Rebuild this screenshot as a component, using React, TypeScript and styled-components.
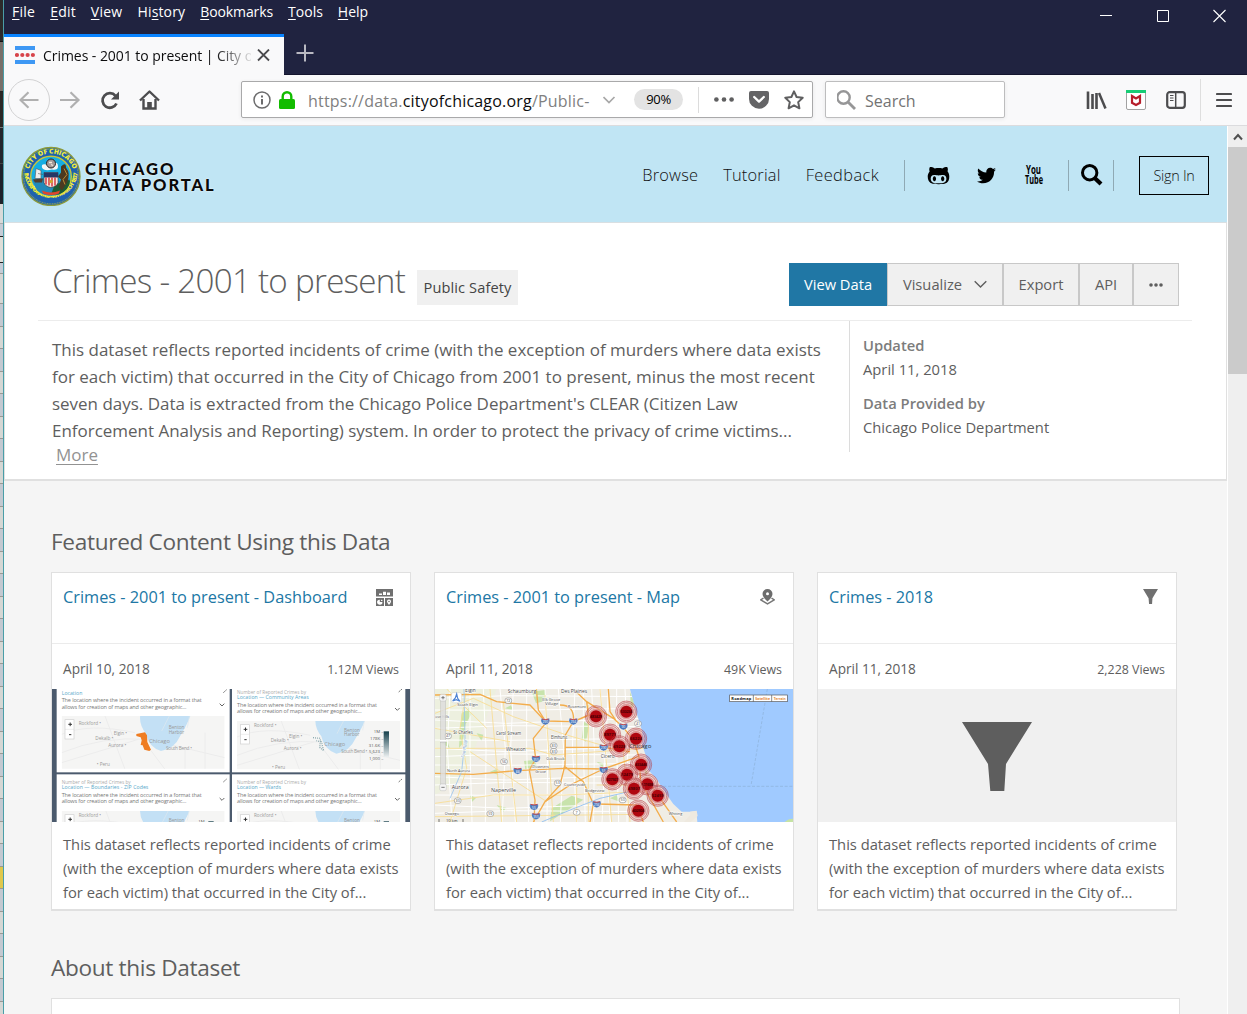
import React from "react";
import styled, { createGlobalStyle } from "styled-components";
import { FaGithubAlt, FaTwitter } from "react-icons/fa";

const ui = `"Open Sans", "Noto Sans", sans-serif`;

const Global = createGlobalStyle`
  * { box-sizing: border-box; }
  body { margin: 0; font-family: ${ui}; overflow: hidden; }
  h1, h2, h3, p { margin: 0; font-weight: 400; }
  svg { display: block; flex: none; }
`;

const Desktop = styled.div`
  display: flex;
  width: 1247px;
  height: 1014px;
  overflow: hidden;
`;
const Behind = styled.div`
  width: 4px;
  flex: none;
  border-right: 1px solid #4a9ea8;
  display: flex;
  flex-direction: column;
`;
const BehindBlock = styled.div<{ $h: number; $c: string; $line?: string }>`
  height: ${(p) => p.$h}px;
  flex: none;
  background: ${(p) => p.$c};
  border-bottom: 1px solid ${(p) => p.$line || "#9a9994"};
`;
const Window = styled.div`
  flex: 1;
  min-width: 0;
  display: flex;
  flex-direction: column;
`;

const TitleBar = styled.div`
  height: 34px;
  flex: none;
  background: #202340;
  display: flex;
  justify-content: space-between;
  padding-left: 8px;
`;
const Menu = styled.div`
  display: flex;
  height: 24px;
  gap: 15px;
  color: #fff;
  font-size: 14px;
  line-height: 24px;
`;
const MenuItem = styled.span<{ $ls: number }>`
  letter-spacing: ${(p) => p.$ls}px;
  u { text-underline-offset: 2px; text-decoration-thickness: 1px; }
`;
const Controls = styled.div`
  display: flex;
  gap: 43px;
  padding: 9px 20px 0 0;
`;
const TabStrip = styled.div`
  height: 41px;
  flex: none;
  background: #202340;
  display: flex;
  box-shadow: inset 0 -1px #14152e;
`;
const Tab = styled.div`
  width: 280px;
  border-top: 3px solid #0a84ff;
  background: #f9f9fa;
  display: flex;
  align-items: center;
  padding: 0 13px 2px 11px;
`;
const TabTitle = styled.div`
  width: 208px;
  margin: 2px 6px 0 8px;
  font-size: 14px;
  letter-spacing: -0.05px;
  white-space: nowrap;
  overflow: hidden;
  color: #0c0c0d;
  line-height: 24px;
  mask-image: linear-gradient(to right, #000 172px, transparent 212px);
`;
const NewTab = styled.div`
  padding: 10px 0 0 12px;
`;
const Toolbar = styled.div`
  height: 51px;
  flex: none;
  background: #f9f9fa;
  border-bottom: 1px solid #dcdcde;
  display: flex;
  align-items: center;
`;
const NavButtons = styled.div`
  display: flex;
  align-items: center;
  width: 237px;
  padding-left: 4px;
`;
const BackButton = styled.div`
  width: 42px;
  height: 42px;
  border: 1px solid #d2d2d3;
  border-radius: 50%;
  display: flex;
  align-items: center;
  justify-content: center;
  margin-right: 10px;
`;
const Gap = styled.span<{ $w: number }>`
  width: ${(p) => p.$w}px;
  flex: none;
`;
const Field = styled.div<{ $w: number; $border: string }>`
  width: ${(p) => p.$w}px;
  height: 37px;
  margin-bottom: 1px;
  background: #fff;
  border: 1px solid ${(p) => p.$border};
  border-radius: 2px;
  box-shadow: 0 1px 4px rgba(0, 0, 0, 0.07);
  display: flex;
  align-items: center;
  padding-left: 11px;
`;
const Url = styled.div`
  width: 283px;
  margin: 2px 12px 0 13px;
  font-size: 16px;
  letter-spacing: 0.2px;
  white-space: nowrap;
  color: #808080;
  b { font-weight: 400; color: #0c0c0d; }
`;
const Zoom = styled.div`
  width: 49px;
  height: 21px;
  border-radius: 11px;
  background: #e3e3e3;
  font-size: 13px;
  letter-spacing: -0.3px;
  line-height: 21px;
  text-align: center;
  margin-left: 18px;
`;
const Rule = styled.span<{ $h: number; $c: string }>`
  width: 1px;
  flex: none;
  height: ${(p) => p.$h}px;
  background: ${(p) => p.$c};
`;
const SearchText = styled.span`
  margin: 2px 0 0 8px;
  font-size: 16px;
  color: #737373;
`;

const Content = styled.div`
  flex: 1;
  display: flex;
  min-height: 0;
`;
const Page = styled.main`
  width: 1223px;
  flex: none;
  background: #f5f5f5;
  overflow: hidden;
`;
const ScrollTrack = styled.div`
  flex: 1;
  background: #efefef;
  border-left: 1px solid #fff;
`;
const ScrollArrow = styled.div`
  height: 21px;
  display: flex;
  justify-content: center;
  padding-top: 7px;
`;
const Thumb = styled.div`
  height: 227px;
  background: #cbcbcb;
`;

const SiteHeader = styled.header`
  height: 97px;
  background: #c0e5f4;
  border-bottom: 1px solid #d9dfe2;
  display: flex;
  justify-content: space-between;
  align-items: center;
  padding: 4px 18px 0 17px;
`;
const Brand = styled.div`
  display: flex;
  align-items: center;
  gap: 4px;
`;
const BrandName = styled.div`
  font: 900 16.6px/16px Lato, sans-serif;
  margin-top: 1px;
  color: #0a0a0a;
  text-shadow: 0 0 2px #fff;
  span { display: block; white-space: nowrap; }
`;
const BrandLine = styled.span<{ $ls: number }>`
  letter-spacing: ${(p) => p.$ls}px;
`;
const SiteNav = styled.nav`
  display: flex;
  align-items: center;
  color: #111;
  margin-bottom: 2px;
`;
const NavLink = styled.a<{ $ls: number }>`
  font-size: 16.4px;
  font-weight: 300;
  letter-spacing: ${(p) => p.$ls}px;
  margin: 0 25px 2px 0;
`;
const SignIn = styled.div`
  width: 70px;
  height: 39px;
  border: 1px solid #000;
  font-size: 14.4px;
  font-weight: 300;
  letter-spacing: -0.25px;
  line-height: 38px;
  text-align: center;
  margin-left: 25px;
`;

const Hero = styled.section`
  height: 258px;
  background: #fff;
  border: solid #e0e0e0;
  border-width: 0 1px 2px 1px;
  padding: 40px 34px 0 33px;
`;
const HeroTop = styled.div`
  height: 58px;
  border-bottom: 1px solid #ececec;
  display: flex;
  padding: 0 13px 0 14px;
`;
const Title = styled.h1`
  font-size: 33.2px;
  font-weight: 300;
  line-height: 36px;
  letter-spacing: -0.74px;
  color: #5e5e5e;
  width: 365px;
  white-space: nowrap;
`;
const Tag = styled.span`
  width: 101px;
  height: 35px;
  margin-top: 7px;
  background: #f0f0f0;
  color: #444;
  font-size: 14.6px;
  line-height: 35px;
  text-align: center;
  letter-spacing: 0.1px;
`;
const ButtonRow = styled.div`
  margin-left: auto;
  display: flex;
`;
const Button = styled.button<{ $w: number; $primary?: boolean }>`
  width: ${(p) => p.$w}px;
  height: 43px;
  padding: 0 0 2px;
  border: 1px solid ${(p) => (p.$primary ? "#2077a5" : "#c8c8c8")};
  background: ${(p) => (p.$primary ? "#2077a5" : "#f0f0f0")};
  color: ${(p) => (p.$primary ? "#fff" : "#5e5e5e")};
  font: 400 14.7px ${ui};
  display: flex;
  align-items: center;
  justify-content: center;
  gap: 12px;
  svg { margin-top: 2px; }
`;
const HeroBody = styled.div`
  display: flex;
`;
const Description = styled.div`
  width: 811px;
  padding: 15px 0 0 14px;
  color: #5e5e5e;
  font-size: 16.98px;
  line-height: 27px;
`;
const Line = styled.span`
  display: block;
  white-space: nowrap;
`;
const More = styled.a`
  display: block;
  margin-left: 4px;
  margin-top: -3px;
  color: #929292;
  text-decoration: underline;
  text-underline-offset: 3px;
`;
const Meta = styled.dl`
  margin: 0;
  height: 131px;
  border-left: 1px solid #dcdcdc;
  padding: 12px 0 0 13px;
  font-size: 14.75px;
  line-height: 24px;
  color: #5e5e5e;
  dt { font-weight: 600; color: #7c7c7c; }
  dd { margin: 0 0 10px; }
`;

const Section = styled.section<{ $top: number }>`
  padding: ${(p) => p.$top}px 0 0 47px;
`;
const SectionTitle = styled.h2`
  font-size: 22.6px;
  line-height: 36px;
  letter-spacing: -0.32px;
  color: #5e5e5e;
`;
const Cards = styled.div`
  display: flex;
  gap: 23px;
  margin-top: 12px;
`;
const Card = styled.article`
  width: 360px;
  height: 339px;
  background: #fff;
  border: 1px solid #e0e0e0;
  border-bottom-width: 2px;
`;
const CardHead = styled.div`
  height: 71px;
  border-bottom: 1px solid #ebebeb;
  padding: 12px 16px 0 11px;
  display: flex;
  justify-content: space-between;
`;
const CardTitle = styled.h3`
  font-size: 16.31px;
  line-height: 24px;
  color: #2077a5;
`;
const CardMeta = styled.div`
  height: 45px;
  padding: 4px 11px 0 11px;
  display: flex;
  justify-content: space-between;
  align-items: center;
  font-size: 13.65px;
  color: #5e5e5e;
`;
const Views = styled.span`
  font-size: 12.4px;
  margin-top: 1px;
`;
const Preview = styled.div`
  height: 133px;
  background: #f0f0f0;
  overflow: hidden;
  display: flex;
  justify-content: center;
`;
const Excerpt = styled.p`
  padding: 10px 0 0 11px;
  font-size: 14.73px;
  line-height: 24px;
  color: #5e5e5e;
`;
const AboutPanel = styled.div`
  width: 1129px;
  height: 60px;
  margin-top: 12px;
  background: #fff;
  border: 1px solid #e0e0e0;
`;

function Seal() {
  return (
    <svg width="60" height="60" viewBox="-30 -30.5 60 60">
      <defs>
        <path id="sealTop" d="M-22.8 5 A23.3 23.3 0 1 1 22.8 5" />
        <path id="sealBottom" d="M-26.6 -3 A26.7 26.7 0 0 0 26.6 -3" />
      </defs>
      <circle r="29" fill="#1f62ad" stroke="#8c9a3a" strokeWidth="1.3" />
      <circle r="27.3" fill="none" stroke="#c9c53a" strokeWidth=".7" strokeDasharray="1 .7" />
      <circle r="20.3" fill="#16aee2" stroke="#c9c53a" strokeWidth="1.4" />
      <g fill="#f0ec3c" fontFamily="Open Sans" fontWeight="800" fontSize="6.6">
        <text><textPath href="#sealTop" startOffset="50%" textAnchor="middle">CITY OF CHICAGO</textPath></text>
        <text fontSize="5.8"><textPath href="#sealBottom" startOffset="50%" textAnchor="middle" textLength="80">INCORPORATED 4th MARCH 1837</textPath></text>
      </g>
      <path d="M-19 3 Q-10 0 0 3 T19 2 Q18 13 8 18 Q-5 22 -14 14Z" fill="#2389b8" />
      <path d="M3 10 Q14 2 19 4 Q19 13 8 18 L0 18Z" fill="#1d5b32" />
      <path d="M-9 -9 q-1 -4 4 -3 q2 -4 6 -2 q6 -1 6 4 q0 4 -6 3 q-8 2 -10 -2Z" fill="#f3f6f5" />
      <circle cx="0" cy="-13" r="4.5" fill="#a39a98" stroke="#222" strokeWidth="1" />
      <path d="M-2 -14 h3 M0 -12 l2 1" stroke="#f4e9dc" strokeWidth="1.3" />
      <path d="M-15 -8 l5 2 v8 h-6Z M-13 -3 l5 1" fill="#eee" stroke="#555" strokeWidth=".6" />
      <path d="M-18 3 l10 -1 -1 4 h-7Z" fill="#503f32" />
      <path d="M10 -10 q5 -5 5 1 q5 6 1 15 l-5 8 -3 -3 2 -8 -3 -3 3 -4Z" fill="#4c3a21" />
      <path d="M13 -8 l3 6 -4 5 2 5" stroke="#bf8d32" fill="none" />
      <path d="M-7 -4 H7 V6 Q6 10 0 11 Q-6 10 -7 6Z" fill="#f6eadf" stroke="#333" strokeWidth=".6" />
      <path d="M-7 -4 H7 V1 H-7Z" fill="#263766" />
      <path d="M-5 1 V8 M-2 1 V9 M1 1 V10 M4 1 V9" stroke="#d42d36" strokeWidth="1.4" />
      <circle cx="0" cy="5" r="1.8" fill="#d1a730" />
      <path d="M-9 14 Q0 18 9 14 L8 17 Q0 20 -8 17Z" fill="#e0452d" />
    </svg>
  );
}

interface PaneProps { x: number; y: number; name: string; nameWidth: number; lead?: boolean; scale?: boolean; clip?: boolean; }

function DashboardPane({ x, y, name, nameWidth, lead, scale, clip }: PaneProps) {
  const o = lead ? 15 : 0;
  const mapHeight = clip ? 60 : lead ? 145 : 158;
  return (
    <g>
      {lead && <text x={x} y={y + 13} fontSize="14" fill="#aaa" textLength="207">Number of Reported Crimes by</text>}
      <text x={x} y={y + 14 + o} fontSize="15.5" fill="#57a8c9" textLength={nameWidth}>{name}</text>
      <g fontSize="16.5" fill="#777">
        <text x={x} y={y + 37 + o} textLength="420">The location where the incident occurred in a format that</text>
        <text x={x} y={y + 56 + o} textLength="374">allows for creation of maps and other geographic...</text>
      </g>
      <path d={`M${x + 474} ${y + 41 + o} l7 7 7 -7`} fill="none" stroke="#666" strokeWidth="3" />
      <path d={`M${x + 485} ${y + 8} l10 -9`} stroke="#777" strokeWidth="3" strokeDasharray="6 2" />
      <svg x={x} y={y + (lead ? 95 : 78)} width="489" height={mapHeight} viewBox={`0 0 489 ${mapHeight}`}>
        <rect width="489" height="160" fill="#f5f5f4" />
        <g transform={lead ? "translate(0 -7)" : undefined}>
          <path d="M0 55 Q80 20 220 50 M0 110 Q120 60 260 70 L489 125 M0 140 L230 70 M130 0 L190 160 M310 160 L250 80 M370 160 V100 M430 160 V50" stroke="#ececec" strokeWidth="3" fill="none" />
          <path d="M236 -4 H387 Q380 20 356 59 Q338 99 298 105 Q261 93 253 53 Q231 25 236 -4Z" fill="#c3e0f5" />
          <path d="M300 45 L323 0 M385 -10 L377 35" stroke="#dfe9ef" strokeWidth="2" />
          {!lead && <path d="M224 54 l26 -5 6 9 1 20 11 23 -5 4 -15 -4 -5 -13 -6 -1 3 -14 -3 -9 -13 -4Z" fill="#ef7d22" />}
          {lead && !clip && <path d="M228 57 l20 2 6 14 6 23 -12 -10 2 -17 -12 -3" stroke="#8fadb2" fill="none" strokeWidth="4" strokeDasharray="3 3" />}
          <g fill="#999" fontSize="14">
            <text x="51" y="26">Rockford •</text>
            <text x="321" y="39">Benton</text>
            {!clip && (
              <>
                <text x="156" y="57">Elgin •</text>
                <text x="101" y="71">Dekalb •</text>
                <text x="140" y="93">Aurora •</text>
                <text x="105" y="150">• Peru</text>
                <text x="313" y="103" textLength="78">South Bend •</text>
                <text x="321" y="53">Harbor</text>
                <text x="262" y="81" fontSize="17">Chicago</text>
              </>
            )}
          </g>
        </g>
        <rect x="10" y="11" width="27" height="58" fill="#fff" stroke="#d0d0d0" strokeWidth="2" />
        <path d="M10 40 h27" stroke="#ccc" />
        <path d="M20 25 h11 M25.5 19.5 v11" stroke="#333" strokeWidth="3" />
        {!clip && <path d="M22 56 h7" stroke="#333" strokeWidth="3" />}
        {scale && (
          <g fill="#555" fontSize="13" textAnchor="end">
            <rect x="440" y="31" width="16" height="78" fill="url(#scaleFill)" />
            <text x="439" y={clip ? 36 : 37}>1M –</text>
            {!clip && (
              <>
                <text x="439" y="57">178K –</text>
                <text x="439" y="77">31.6K –</text>
                <text x="439" y="97">5,623 –</text>
                <text x="439" y="116">1,000 –</text>
              </>
            )}
          </g>
        )}
      </svg>
    </g>
  );
}

function DashboardPreview() {
  return (
    <svg width="358" height="133" viewBox="12 12 1074 399" fontFamily="Open Sans, sans-serif">
      <defs>
        <linearGradient id="scaleFill" x2="0" y2="1"><stop stopColor="#143f4b" /><stop offset="1" stopColor="#eef2f3" /></linearGradient>
      </defs>
      <rect x="12" y="12" width="1074" height="399" fill="#4b5a6d" />
      <rect x="26" y="0" width="519" height="262" fill="#fff" />
      <rect x="552" y="0" width="520" height="262" fill="#fff" />
      <rect x="26" y="268" width="519" height="150" fill="#fff" />
      <rect x="552" y="268" width="520" height="150" fill="#fff" />
      <DashboardPane x={41} y={15} name="Location" nameWidth={62} />
      <DashboardPane x={567} y={13} name="Location — Community Areas" nameWidth={215} lead scale />
      <DashboardPane x={41} y={283} name="Location — Boundaries - ZIP Codes" nameWidth={260} lead scale clip />
      <DashboardPane x={567} y={283} name="Location — Wards" nameWidth={132} lead scale clip />
    </svg>
  );
}

const clusters: [number, number, string][] = [
  [498, 94, "483429"], [589, 80, "530234"], [540, 149, "89771"], [618, 161, "66224"], [568, 184, "49228"], [633, 239, "433446"],
  [591, 269, "62479"], [547, 283, "327927"], [652, 298, "521698"], [612, 311, "49807"], [683, 332, "52459"], [625, 377, "402504"],
];
const shields: [number, number, string][] = [
  [346, 109, "290"], [430, 109, "294"], [318, 221, "355"], [580, 124, "90"], [521, 187, "290"], [521, 254, "55"], [263, 257, "88"], [312, 365, "55"], [318, 393, "355"], [500, 357, "294"],
];
const routes: [number, number, string][] = [[235, 47, "72"], [54, 153, "47"], [222, 230, "56"], [371, 182, "83"], [371, 199, "83"], [383, 294, "53"], [83, 347, "30"], [181, 386, "59"], [440, 382, "7"], [578, 345, "50"], [624, 116, "41"]];
const places: [number, number, string, number, number][] = [
  [105, 21, "Elgin", 13, 32], [233, 23, "Schaumburg", 14, 86], [393, 23, "Des Plaines", 14, 78], [337, 47, "Elk Grove", 12, 54], [345, 60, "Village", 12, 40],
  [82, 63, "South Elgin", 12, 62], [413, 69, "Rosemont", 12, 55], [70, 147, "St Charles", 13, 58], [198, 149, "Carol Stream", 13, 75], [363, 162, "Elmhurst", 13, 49],
  [228, 198, "Wheaton", 14, 59], [349, 224, "Oak Brook", 12, 54], [512, 220, "Cicero", 13, 42], [307, 250, "Downers", 12, 50], [316, 263, "Grove", 12, 32],
  [51, 261, "North Aurora", 12, 69], [65, 311, "Aurora", 17, 51], [183, 321, "Naperville", 17, 75], [402, 303, "Countryside", 12, 64], [465, 320, "Bridgeview", 12, 58],
  [44, 389, "Oswego", 12, 43], [716, 391, "Whiting", 12, 41], [16, 100, "ove Hills", 12, 41],
];

function MapPreview() {
  return (
    <svg width="358" height="133" viewBox="15 12 1074 399" fontFamily="Open Sans, sans-serif">
      <rect x="15" y="12" width="1074" height="399" fill="#f0ede5" />
      <path d="M15 12 H200 L150 150 100 280 15 330Z" fill="#edf0df" />
      <g fill="#c8e3ac">
        <path d="M95 85 l22 -15 7 18 -17 29 -10 60 -10 12 3 -60Z M305 20 l40 -5 3 32 -30 8Z M282 228 l30 -3 10 20 -36 7Z M365 370 l60 -38 35 12 -60 40 -40 25Z M462 110 l16 10 -10 50 -13 -7Z M140 145 l20 4 -5 20Z M225 70 l18 -9 6 14Z M35 175 l18 -5 6 19Z M180 260 l20 -8 5 18Z M600 20 l12 30 -8 40Z M640 240 l12 20 -4 16Z M120 330 l18 9 -13 13Z M200 360 l28 8 -10 15Z M540 340 l20 -10 9 20Z M500 230 l20 5 -2 13Z" />
      </g>
      <g stroke="#fff" strokeWidth="3" fill="none">
        {[40, 75, 105, 130, 165, 190, 215, 240, 275, 300, 330, 360, 385].map((y, i) => <path key={y} d={`M15 ${y} L230 ${y + (i % 3) * 9 - 8} 640 ${y - 5}`} />)}
        {[60, 120, 160, 210, 250, 290, 345, 385, 435, 460, 485, 510, 535, 560, 585].map((x, i) => <path key={x} d={`M${x} 12 L${x + (i % 4) * 8 - 8} 190 ${x + 6} 411`} />)}
      </g>
      <g stroke="#f8dd94" strokeWidth="2.6" fill="none">
        <path d="M15 85 L130 40 250 95 410 150 600 205 M110 12 L90 130 110 250 60 411 M180 12 L215 411 M220 50 L260 411 M15 190 L300 190 370 210 640 190 M15 355 L190 330 400 330 640 320 M440 130 V411 M475 60 V411 M510 12 L545 411 M15 130 L240 170 M345 30 L370 411 M15 395 L640 388 M580 200 L600 411 M500 300 L640 300 M120 200 L350 350 M50 12 L170 130" />
      </g>
      <g stroke="#f3ad4c" strokeWidth="4" fill="none" strokeLinejoin="round">
        <path d="M15 30 L150 28 200 50 300 60 345 108 430 110 480 90 M319 12 L325 75 349 112 310 160 317 222 298 255 315 345 312 411 M15 265 L130 268 262 257 400 250 520 252 625 215 M390 60 Q435 60 430 110 L406 150 405 240 390 300 345 350 310 411 M405 187 L520 187 600 200 M430 110 L475 90 470 50 430 12 M470 50 L550 100 578 125 610 165 627 215 632 290 700 411 M535 12 L540 80 560 110 M405 245 L460 290 490 356 480 411 M345 350 L420 300 520 252 M500 357 L620 360 640 411 M655 290 L740 411" />
      </g>
      <path d="M600 12 L620 85 637 140 635 175 650 220 652 252 680 282 700 315 730 357 755 380 780 380 799 378 802 411 H1089 V12Z" fill="#a0caff" />
      <path d="M780 380 l20 -3 3 16 -21 18 h-20 l19 -22Z" fill="#eee9df" />
      <path d="M1064 411 q10 -10 25 -10 v10Z" fill="#c5e3a4" />
      <path d="M1012 12 L963 302 M672 304 H1089" stroke="#8db1d8" strokeWidth="2" strokeDasharray="9 5" fill="none" />
      <path d="M335 411 Q430 370 510 340 L640 310" stroke="#8bbdf1" strokeWidth="2.5" fill="none" />
      <path d="M102 12 L105 160 95 260 60 340" stroke="#9cc4ed" strokeWidth="2.5" fill="none" />
      {shields.map(([x, y, n]) => (
        <g key={`${x}-${y}`}>
          <path d={`M${x - 12} ${y - 9} q12 5 24 0 q5 16 -12 20 q-17 -4 -12 -20Z`} fill="#4b79bd" stroke="#fff" />
          <path d={`M${x - 10} ${y - 7} q10 4 20 0`} stroke="#cc4c4c" strokeWidth="3" fill="none" />
          <text x={x} y={y + 6} fontSize="10" fill="#fff" textAnchor="middle">{n}</text>
        </g>
      ))}
      {routes.map(([x, y, n]) => (
        <g key={`${x}-${y}`}>
          <rect x={x - 10} y={y - 8} width="20" height="16" rx="7" fill="#fff" stroke="#777" strokeWidth="1.5" />
          <text x={x} y={y + 4} fontSize="11" fill="#444" textAnchor="middle">{n}</text>
        </g>
      ))}
      <g fill="#444" stroke="#fff" strokeWidth="2.5" paintOrder="stroke">
        {places.map(([x, y, t, s, w]) => <text key={t} x={x} y={y} fontSize={s + 1} textLength={w} lengthAdjust="spacingAndGlyphs">{t}</text>)}
        <text transform="translate(103 219) rotate(-80)" fontSize="13" fill="#628fc2">Fox River</text>
      </g>
      {clusters.map(([x, y, n]) => (
        <g key={n} transform={`translate(${x} ${y})`}>
          <circle r="32" fill="#b40c16" fillOpacity=".14" stroke="#b8434a" strokeWidth="1.6" />
          <circle r="27" fill="#fff" fillOpacity=".25" stroke="#b8434a" strokeWidth="1.6" />
          <circle r="22" fill="#b40c16" fillOpacity=".3" stroke="#d88" strokeWidth="2" />
          <circle r="18" fill="#b00710" />
          <text y="4" textAnchor="middle" fontSize="12" fontWeight="700" fill="#4c0005" textLength="36">{n}</text>
        </g>
      ))}
      <text x="597" y="188" fontSize="18" fill="#333" textLength="67" lengthAdjust="spacingAndGlyphs">Chicago</text>
      <rect x="32" y="42" width="15" height="260" fill="#ddd" fillOpacity=".85" stroke="#aaa" />
      <path d="M30 168 h19" stroke="#fff" strokeWidth="6" />
      <path d="M30 171 h19" stroke="#999" strokeWidth="1.5" />
      <rect x="29" y="28" width="20" height="20" rx="5" fill="#f5f5f5" stroke="#aaa" />
      <rect x="29" y="297" width="20" height="20" rx="5" fill="#f5f5f5" stroke="#aaa" />
      <path d="M34 38 h10 M39 33 v10 M34 307 h10" stroke="#666" strokeWidth="2.5" />
      <rect x="64" y="23" width="31" height="30" rx="6" fill="#fff" stroke="#bbb" />
      <path d="M80 27 L83 40 90 49 79 44 68 48 76 39Z" fill="none" stroke="#4e83d4" strokeWidth="3.5" />
      <path d="M27 402 v9 M99 402 v9" stroke="#333" strokeWidth="2" />
      <text x="48" y="411" fontSize="12" fill="#333">10 km</text>
      <g fontSize="12" fontWeight="700">
        <rect x="899" y="30" width="173" height="20" fill="#fff" stroke="#555" strokeWidth="2" />
        <path d="M970 30 v20 M1025 30 v20" stroke="#555" strokeWidth="2" />
        <text x="904" y="45" fill="#111" textLength="60">Roadmap</text>
        <text x="976" y="45" fill="#e2832f" textLength="44" lengthAdjust="spacingAndGlyphs">Satellite</text>
        <text x="1031" y="45" fill="#e2832f" textLength="36" lengthAdjust="spacingAndGlyphs">Terrain</text>
      </g>
    </svg>
  );
}

function DashboardIcon() {
  return (
    <svg width="17" height="17" viewBox="0 0 17 17">
      <path d="M0 0 H17 V7.5 H0Z M0 9 H8 V17 H0Z M9 9 H17 V17 H9Z" fill="#707070" />
      <path d="M3 6 v-1.5 h3 V6Z M7 6 V2.7 h3 V6Z M11 6 V3.5 h3 V6Z" fill="#fff" />
      <path d="M3.8 10.8 v2.2 h2.6 a2.7 2.5 0 1 1 -2.6 -2.2Z M5 10.5 l2 1.6 h-2Z" fill="#fff" />
      <path d="M13 10.5 a2 2 0 0 1 1.6 3.2 L13 16 l-1.6 -2.3 A2 2 0 0 1 13 10.5Z" fill="#fff" />
      <circle cx="13" cy="12.5" r=".8" fill="#707070" />
    </svg>
  );
}
function PinIcon() {
  return (
    <svg width="15" height="16" viewBox="0 0 15 16">
      <path d="M3.5 9 L.8 10.9 7.5 14.8 14.2 10.9 11.5 9" fill="none" stroke="#777" strokeWidth="1.5" />
      <path d="M7.5 0 a5 5 0 0 1 5 5 q0 2.6 -2.2 4.7 L7.5 12.5 4.7 9.7 Q2.5 7.2 2.5 5 a5 5 0 0 1 5 -5Z" fill="#6c6c6c" />
      <circle cx="7.5" cy="4.8" r="1.5" fill="#fff" />
    </svg>
  );
}
function Funnel({ w, h, color }: { w: number; h: number; color: string }) {
  return (
    <svg width={w} height={h} viewBox="0 0 70 69" preserveAspectRatio="none">
      <path d="M0 0 H70 L44 42 42.3 69 H28.3 L26 42Z" fill={color} />
    </svg>
  );
}

interface CardData { title: string; date: string; views: string; icon: React.ReactNode; preview: React.ReactNode; }
const cards: CardData[] = [
  { title: "Crimes - 2001 to present - Dashboard", date: "April 10, 2018", views: "1.12M Views", icon: <DashboardIcon />, preview: <DashboardPreview /> },
  { title: "Crimes - 2001 to present - Map", date: "April 11, 2018", views: "49K Views", icon: <PinIcon />, preview: <MapPreview /> },
  { title: "Crimes - 2018", date: "April 11, 2018", views: "2,228 Views", icon: <Funnel w={15} h={15} color="#707070" />, preview: <Funnel w={70} h={69} color="#5e5e5e" /> },
];
const IconSlot = styled.div<{ $r: number }>`
  padding-top: 4px;
  margin-right: ${(p) => p.$r}px;
`;
const PreviewInner = styled.div<{ $top: number }>`
  padding-top: ${(p) => p.$top}px;
`;

const menu: [string, string, string, number][] = [["", "F", "ile", 0.25], ["", "E", "dit", 0.2], ["", "V", "iew", 0.25], ["Hi", "s", "tory", 0.15], ["", "B", "ookmarks", -0.1], ["", "T", "ools", 0], ["", "H", "elp", 0]];
const blocks: [number, string, string?][] = [
  [42, "#2b2b2b", "#111"], [50, "#77706a", "#222"], [36, "#2a2826", "#777"], [36, "#23262c", "#444"], [40, "#1d222b", "#222"], [20, "#d8dad9", "#aaa"], [13, "#c5ccd6", "#222"], [26, "#deded8", "#222"], [11, "#c4ccd6"], [30, "#d5d7d4"],
];
const rows = Array.from({ length: 32 }, (_, i) => i);

export default function App() {
  return (
    <>
      <Global />
      <Desktop>
        <Behind>
          {blocks.map(([h, c, l], i) => <BehindBlock key={i} $h={h} $c={c} $line={l} />)}
          {rows.map((i) => <BehindBlock key={i} $h={i % 2 ? 22 : 23} $c={i === 25 ? "#e0c84c" : i % 2 ? "#d5d7d4" : "#c3c9d1"} />)}
        </Behind>
        <Window>
          <TitleBar>
            <Menu>
              {menu.map(([a, b, c, ls]) => <MenuItem key={b + c} $ls={ls}>{a}<u>{b}</u>{c}</MenuItem>)}
            </Menu>
            <Controls>
              <svg width="14" height="14"><path d="M1 6.5 H13" stroke="#fff" /></svg>
              <svg width="14" height="14"><path d="M1.5 1.5 H12.5 V12.5 H1.5Z" stroke="#fff" fill="none" /></svg>
              <svg width="14" height="14"><path d="M.5 1 L12.5 13 M12.5 1 L.5 13" stroke="#fff" strokeWidth="1.1" /></svg>
            </Controls>
          </TitleBar>
          <TabStrip>
            <Tab>
              <svg width="20" height="18" viewBox="0 0 20 18">
                <path d="M0 2 H20 M0 16 H20" stroke="#3e98f4" strokeWidth="4" />
                <g fill="#d7444a"><circle cx="2" cy="9" r="2.1" /><circle cx="7.3" cy="9" r="2.1" /><circle cx="12.6" cy="9" r="2.1" /><circle cx="17.9" cy="9" r="2.1" /></g>
              </svg>
              <TabTitle>Crimes - 2001 to present | City of Chicago</TabTitle>
              <svg width="13" height="13"><path d="M1 .5 L12 11.5 M12 .5 L1 11.5" stroke="#4a4a4d" strokeWidth="1.8" /></svg>
            </Tab>
            <NewTab><svg width="18" height="18"><path d="M9 0.5 V17.5 M0.5 9 H17.5" stroke="#b9b9c2" strokeWidth="2" /></svg></NewTab>
          </TabStrip>
          <Toolbar>
            <NavButtons>
              <BackButton>
                <svg width="20" height="18"><path d="M19.5 9 H1 M9.5 1.2 L1.5 9 9.5 16.8" stroke="#b0b0b0" strokeWidth="2.2" fill="none" /></svg>
              </BackButton>
              <svg width="21" height="18"><path d="M0 9 H18.5 M10.5 1.2 L18.5 9 10.5 16.8" stroke="#b0b0b0" strokeWidth="2.2" fill="none" /></svg>
              <Gap $w={19} />
              <svg width="20" height="19"><path d="M16.5 12.5 A7.3 7.3 0 1 1 15.5 4.8" stroke="#4c4c4e" strokeWidth="2.8" fill="none" /><path d="M19 0.5 V8.5 H11Z" fill="#4c4c4e" /></svg>
              <Gap $w={19} />
              <svg width="21" height="20" viewBox="0 0 21 20"><path d="M1 10.5 L10.5 1.5 20 10.5" stroke="#4c4c4e" strokeWidth="2.4" fill="none" strokeLinejoin="round" /><path d="M4.5 9 V18.5 H16.5 V9" stroke="#4c4c4e" strokeWidth="2.4" fill="none" /><path d="M8.2 19 V12 h4.6 V19Z" fill="#4c4c4e" /></svg>
            </NavButtons>
            <Field $w={572} $border="#a9a9aa">
              <svg width="18" height="18"><circle cx="9" cy="9" r="8" fill="none" stroke="#6b6b6c" strokeWidth="1.5" /><path d="M9 8 V13.5 M9 4.5 V6.6" stroke="#6b6b6c" strokeWidth="2" /></svg>
              <Gap $w={8} />
              <svg width="16" height="18"><rect y="8" width="16" height="10" rx="1.5" fill="#12bc00" /><path d="M3.7 9 V5.5 a4.3 4.3 0 0 1 8.6 0 V9" fill="none" stroke="#12bc00" strokeWidth="2.4" /></svg>
              <Url>https://data.<b>cityofchicago.org</b>/Public-</Url>
              <svg width="13" height="9"><path d="M.5 2 L6 7.5 11.5 2" stroke="#a8a8a8" strokeWidth="1.7" fill="none" /></svg>
              <Zoom>90%</Zoom>
              <Gap $w={15} />
              <Rule $h={26} $c="#dcdcdc" />
              <Gap $w={15} />
              <svg width="20" height="5"><g fill="#5f5f60"><circle cx="2.4" cy="2.5" r="2.3" /><circle cx="10" cy="2.5" r="2.3" /><circle cx="17.6" cy="2.5" r="2.3" /></g></svg>
              <Gap $w={15} />
              <svg width="20" height="18"><path d="M2 0 H18 Q20 0 20 2 V8 A10 9.7 0 0 1 0 8 V2 Q0 0 2 0Z" fill="#646466" /><path d="M5.2 6 L10 10.6 14.8 6" stroke="#fff" strokeWidth="2.3" fill="none" strokeLinecap="round" strokeLinejoin="round" /></svg>
              <Gap $w={15} />
              <svg width="20" height="20" viewBox="0 0 20 20"><path d="M10 1.4 L12.6 7 18.7 7.8 14.2 12.1 15.4 18.3 10 15.3 4.6 18.3 5.8 12.1 1.3 7.8 7.4 7Z" fill="none" stroke="#5f5f60" strokeWidth="2" strokeLinejoin="round" /></svg>
            </Field>
            <Gap $w={12} />
            <Field $w={180} $border="#bdbdbe">
              <svg width="20" height="20"><circle cx="6.5" cy="7.5" r="6.2" fill="none" stroke="#969697" strokeWidth="2.4" /><path d="M11 12 L18 19" stroke="#969697" strokeWidth="2.8" /></svg>
              <SearchText>Search</SearchText>
            </Field>
            <Gap $w={81} />
            <svg width="21" height="19"><path d="M2 .5 V18 M6.5 3 V18 M10.5 2 V18" stroke="#4c4c4e" strokeWidth="2.6" /><path d="M13 2 L19.5 17.5" stroke="#4c4c4e" strokeWidth="2.5" /></svg>
            <Gap $w={19} />
            <svg width="20" height="20"><rect x=".5" y=".5" width="19" height="19" rx="1.5" fill="#fff" stroke="#a2a2a2" /><path d="M0 1.5 H20" stroke="#18cc75" strokeWidth="3" /><path d="M6 6 V12.8 L10 15 14 12.8 V6 L10 8.5Z" fill="none" stroke="#b71e2b" strokeWidth="2.2" /></svg>
            <Gap $w={20} />
            <svg width="20" height="18"><rect x="1.2" y="1.2" width="17.6" height="15.6" rx="2.5" fill="none" stroke="#4c4c4e" strokeWidth="2.2" /><path d="M9.7 1 V17" stroke="#4c4c4e" strokeWidth="1.5" /><path d="M4 4.5 H7.5 M4 7 H7.5 M4 9.5 H7.5" stroke="#4c4c4e" strokeWidth="1.2" /></svg>
            <Gap $w={14} />
            <Rule $h={42} $c="#dedede" />
            <Gap $w={15} />
            <svg width="16" height="16"><path d="M1 2 H15 M1 8 H15 M1 14 H15" stroke="#4c4c4e" strokeWidth="2.2" strokeLinecap="round" /></svg>
          </Toolbar>
          <Content>
            <Page>
              <SiteHeader>
                <Brand>
                  <Seal />
                  <BrandName><BrandLine $ls={2}>CHICAGO</BrandLine><BrandLine $ls={1.85}>DATA PORTAL</BrandLine></BrandName>
                </Brand>
                <SiteNav>
                  <NavLink $ls={0.2}>Browse</NavLink>
                  <NavLink $ls={0.2}>Tutorial</NavLink>
                  <NavLink $ls={0.4}>Feedback</NavLink>
                  <Rule $h={31} $c="#8fa9b4" />
                  <Gap $w={22} />
                  <FaGithubAlt size={23} color="#000" />
                  <Gap $w={27} />
                  <FaTwitter size={19} color="#000" />
                  <Gap $w={29} />
                  <svg width="18" height="22" fontFamily="Open Sans" fontWeight="700" fontSize="12" overflow="visible">
                    <text x="1" y="10" textLength="15" lengthAdjust="spacingAndGlyphs">You</text>
                    <text x="0" y="20" textLength="18" lengthAdjust="spacingAndGlyphs">Tube</text>
                  </svg>
                  <Gap $w={25} />
                  <Rule $h={31} $c="#8fa9b4" />
                  <Gap $w={12} />
                  <svg width="22" height="22"><circle cx="8.7" cy="8.7" r="7.2" fill="none" stroke="#000" strokeWidth="3" /><path d="M13.7 14 L20 20" stroke="#000" strokeWidth="4.2" /></svg>
                  <Gap $w={10} />
                  <Rule $h={31} $c="#8fa9b4" />
                  <SignIn>Sign In</SignIn>
                </SiteNav>
              </SiteHeader>
              <Hero>
                <HeroTop>
                  <Title>Crimes - 2001 to present</Title>
                  <Tag>Public Safety</Tag>
                  <ButtonRow>
                    <Button $w={98} $primary>View Data</Button>
                    <Button $w={116}>Visualize<svg width="13" height="9"><path d="M.7 1.2 L6.5 7 12.3 1.2" stroke="#5e5e5e" strokeWidth="1.4" fill="none" /></svg></Button>
                    <Button $w={76}>Export</Button>
                    <Button $w={54}>API</Button>
                    <Button $w={46}><svg width="14" height="4"><g fill="#5e5e5e"><circle cx="2" cy="2" r="1.8" /><circle cx="7" cy="2" r="1.8" /><circle cx="12" cy="2" r="1.8" /></g></svg></Button>
                  </ButtonRow>
                </HeroTop>
                <HeroBody>
                  <Description>
                    <Line>This dataset reflects reported incidents of crime (with the exception of murders where data exists</Line>
                    <Line>for each victim) that occurred in the City of Chicago from 2001 to present, minus the most recent</Line>
                    <Line>seven days. Data is extracted from the Chicago Police Department's CLEAR (Citizen Law</Line>
                    <Line>Enforcement Analysis and Reporting) system. In order to protect the privacy of crime victims...</Line>
                    <More>More</More>
                  </Description>
                  <Meta>
                    <dt>Updated</dt><dd>April 11, 2018</dd>
                    <dt>Data Provided by</dt><dd>Chicago Police Department</dd>
                  </Meta>
                </HeroBody>
              </Hero>
              <Section $top={43}>
                <SectionTitle>Featured Content Using this Data</SectionTitle>
                <Cards>
                  {cards.map((c, i) => (
                    <Card key={c.title}>
                      <CardHead><CardTitle>{c.title}</CardTitle><IconSlot $r={i ? 2 : 1}>{c.icon}</IconSlot></CardHead>
                      <CardMeta><span>{c.date}</span><Views>{c.views}</Views></CardMeta>
                      <Preview><PreviewInner $top={i === 2 ? 33 : 0}>{c.preview}</PreviewInner></Preview>
                      <Excerpt>
                        <Line>This dataset reflects reported incidents of crime</Line>
                        <Line>(with the exception of murders where data exists</Line>
                        <Line>for each victim) that occurred in the City of...</Line>
                      </Excerpt>
                    </Card>
                  ))}
                </Cards>
              </Section>
              <Section $top={39}>
                <SectionTitle>About this Dataset</SectionTitle>
                <AboutPanel />
              </Section>
            </Page>
            <ScrollTrack>
              <ScrollArrow><svg width="10" height="8"><path d="M1 6.5 L5 2 9 6.5" stroke="#505050" strokeWidth="2" fill="none" /></svg></ScrollArrow>
              <Thumb />
            </ScrollTrack>
          </Content>
        </Window>
      </Desktop>
    </>
  );
}
